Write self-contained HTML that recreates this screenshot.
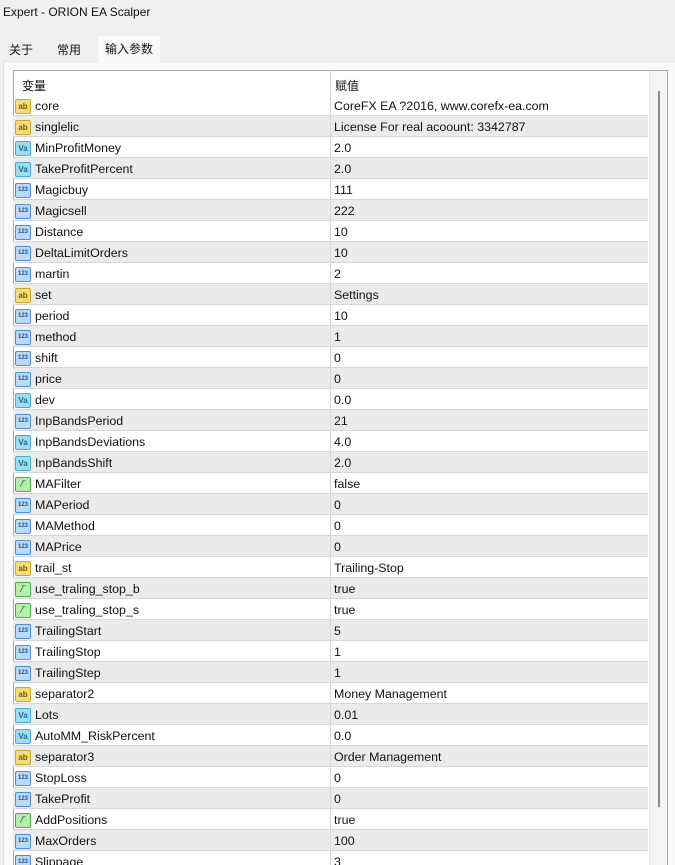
<!DOCTYPE html>
<html><head><meta charset="utf-8"><style>
*{margin:0;padding:0;box-sizing:border-box}
body{width:675px;height:865px;overflow:hidden;background:#f0f0f0;font-family:"Liberation Sans","Noto Sans CJK SC",sans-serif;font-size:12.4px;color:#111;position:relative}
.title{position:absolute;left:3px;top:5px;font-size:12px}
.tab{position:absolute;top:37px;height:24px;font-size:12px;padding-top:4px}
.panel{position:absolute;left:3px;top:61px;width:672px;height:804px;background:#f9f9f9;border-left:1px solid #e0e0e0;border-top:1px solid #e6e6e6}
.tbl{position:absolute;left:13px;top:70px;width:655px;height:795px;background:#fff;border:1px solid #a8a8a8;border-bottom:none;overflow:hidden}
.hdr{position:absolute;left:0;top:0;width:635px;height:25px}
.hdr span{position:absolute;top:6px;font-size:12px}
.row{position:absolute;left:0;width:635px;height:21px;border-bottom:1px solid #d6d6d6}
.row.g{background:#ebebeb}
.row .n{position:absolute;left:22px;top:4px}
.row .v{position:absolute;left:321px;top:4px}
.ic{position:absolute;left:2px;top:4px;width:16px;height:15px;border-radius:2px;font-size:8px;line-height:13px;text-align:center;font-weight:bold;font-style:normal}
.ab{background:#f3dc7a;border:1px solid #c9a832;color:#7a5a00}
.va{background:#9fdcef;border:1px solid #4aaad0;color:#1a6c9a}
.n1{background:#bcd9f5;border:1px solid #4f8ed0;color:#1a4f9a;font-size:6px}
.bo{background:#b8ecb0;border:1px solid #46b040;color:#1a7a1a}
.vl{position:absolute;left:317px;top:0;width:1px;height:800px;background:#d6d6d6}
.sb{position:absolute;left:635px;top:0;width:19px;height:795px;background:#f4f4f4;border-left:1px solid #e8e8e8}
.th{position:absolute;left:8px;top:20px;width:2px;height:716px;background:#8a8a8a}
</style></head><body>
<div class="title">Expert - ORION EA Scalper</div>
<div class="tab" style="left:9px">关于</div>
<div class="tab" style="left:57px">常用</div>
<div class="panel"></div>
<div class="tab" style="left:98px;width:62px;background:#f9f9f9;padding-left:7px;top:36px;height:26px">输入参数</div>
<div class="tbl">
<div class="hdr"><span style="left:8px">变量</span><span style="left:321px">赋值</span></div>
<div class="sb"><div class="th"></div></div>
</div>
<div class="tbl" style="background:none;border:none">
<div class="row" style="top:25px"><i class="ic ab">ab</i><span class="n">core</span><span class="v">CoreFX EA ?2016, www.corefx-ea.com</span></div>
<div class="row g" style="top:46px"><i class="ic ab">ab</i><span class="n">singlelic</span><span class="v">License For real acoount: 3342787</span></div>
<div class="row" style="top:67px"><i class="ic va">Va</i><span class="n">MinProfitMoney</span><span class="v">2.0</span></div>
<div class="row g" style="top:88px"><i class="ic va">Va</i><span class="n">TakeProfitPercent</span><span class="v">2.0</span></div>
<div class="row" style="top:109px"><i class="ic n1">123</i><span class="n">Magicbuy</span><span class="v">111</span></div>
<div class="row g" style="top:130px"><i class="ic n1">123</i><span class="n">Magicsell</span><span class="v">222</span></div>
<div class="row" style="top:151px"><i class="ic n1">123</i><span class="n">Distance</span><span class="v">10</span></div>
<div class="row g" style="top:172px"><i class="ic n1">123</i><span class="n">DeltaLimitOrders</span><span class="v">10</span></div>
<div class="row" style="top:193px"><i class="ic n1">123</i><span class="n">martin</span><span class="v">2</span></div>
<div class="row g" style="top:214px"><i class="ic ab">ab</i><span class="n">set</span><span class="v">Settings</span></div>
<div class="row" style="top:235px"><i class="ic n1">123</i><span class="n">period</span><span class="v">10</span></div>
<div class="row g" style="top:256px"><i class="ic n1">123</i><span class="n">method</span><span class="v">1</span></div>
<div class="row" style="top:277px"><i class="ic n1">123</i><span class="n">shift</span><span class="v">0</span></div>
<div class="row g" style="top:298px"><i class="ic n1">123</i><span class="n">price</span><span class="v">0</span></div>
<div class="row" style="top:319px"><i class="ic va">Va</i><span class="n">dev</span><span class="v">0.0</span></div>
<div class="row g" style="top:340px"><i class="ic n1">123</i><span class="n">InpBandsPeriod</span><span class="v">21</span></div>
<div class="row" style="top:361px"><i class="ic va">Va</i><span class="n">InpBandsDeviations</span><span class="v">4.0</span></div>
<div class="row g" style="top:382px"><i class="ic va">Va</i><span class="n">InpBandsShift</span><span class="v">2.0</span></div>
<div class="row" style="top:403px"><i class="ic bo">⁄‾</i><span class="n">MAFilter</span><span class="v">false</span></div>
<div class="row g" style="top:424px"><i class="ic n1">123</i><span class="n">MAPeriod</span><span class="v">0</span></div>
<div class="row" style="top:445px"><i class="ic n1">123</i><span class="n">MAMethod</span><span class="v">0</span></div>
<div class="row g" style="top:466px"><i class="ic n1">123</i><span class="n">MAPrice</span><span class="v">0</span></div>
<div class="row" style="top:487px"><i class="ic ab">ab</i><span class="n">trail_st</span><span class="v">Trailing-Stop</span></div>
<div class="row g" style="top:508px"><i class="ic bo">⁄‾</i><span class="n">use_traling_stop_b</span><span class="v">true</span></div>
<div class="row" style="top:529px"><i class="ic bo">⁄‾</i><span class="n">use_traling_stop_s</span><span class="v">true</span></div>
<div class="row g" style="top:550px"><i class="ic n1">123</i><span class="n">TrailingStart</span><span class="v">5</span></div>
<div class="row" style="top:571px"><i class="ic n1">123</i><span class="n">TrailingStop</span><span class="v">1</span></div>
<div class="row g" style="top:592px"><i class="ic n1">123</i><span class="n">TrailingStep</span><span class="v">1</span></div>
<div class="row" style="top:613px"><i class="ic ab">ab</i><span class="n">separator2</span><span class="v">Money Management</span></div>
<div class="row g" style="top:634px"><i class="ic va">Va</i><span class="n">Lots</span><span class="v">0.01</span></div>
<div class="row" style="top:655px"><i class="ic va">Va</i><span class="n">AutoMM_RiskPercent</span><span class="v">0.0</span></div>
<div class="row g" style="top:676px"><i class="ic ab">ab</i><span class="n">separator3</span><span class="v">Order Management</span></div>
<div class="row" style="top:697px"><i class="ic n1">123</i><span class="n">StopLoss</span><span class="v">0</span></div>
<div class="row g" style="top:718px"><i class="ic n1">123</i><span class="n">TakeProfit</span><span class="v">0</span></div>
<div class="row" style="top:739px"><i class="ic bo">⁄‾</i><span class="n">AddPositions</span><span class="v">true</span></div>
<div class="row g" style="top:760px"><i class="ic n1">123</i><span class="n">MaxOrders</span><span class="v">100</span></div>
<div class="row" style="top:781px"><i class="ic n1">123</i><span class="n">Slippage</span><span class="v">3</span></div>
<div class="vl"></div>
</div>
</body></html>
